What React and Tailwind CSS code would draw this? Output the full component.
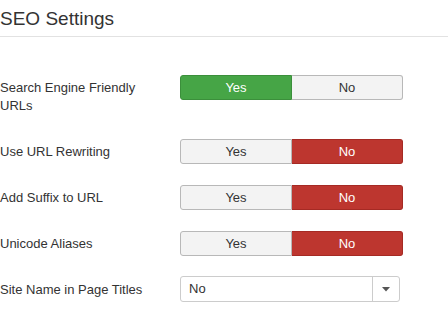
import React from "react";

const rows = [
  { label: "Search Engine Friendly URLs", value: "yes" },
  { label: "Use URL Rewriting", value: "no" },
  { label: "Add Suffix to URL", value: "no" },
  { label: "Unicode Aliases", value: "no" },
];

const Toggle = ({ value }) => {
  const yes = value === "yes";
  return (
    <div className="flex h-[25px] w-[223px] text-[13px]">
      <div
        className={
          yes
            ? "flex flex-1 items-center justify-center rounded-l-[3px] border border-[#3b8f3b] bg-[#46a546] text-white"
            : "flex flex-1 items-center justify-center rounded-l-[3px] border border-[#b8b8b8] bg-[#f3f3f3] text-[#333]"
        }
      >
        Yes
      </div>
      <div
        className={
          yes
            ? "flex flex-1 items-center justify-center rounded-r-[3px] border border-l-0 border-[#b8b8b8] bg-[#f3f3f3] text-[#333]"
            : "flex flex-1 items-center justify-center rounded-r-[3px] border border-l-0 border-[#a52a24] bg-[#bd362f] text-white"
        }
      >
        No
      </div>
    </div>
  );
};

export default function App() {
  return (
    <div
      className="w-[448px] h-[321px] overflow-hidden bg-white text-[#333]"
      style={{ fontFamily: '"Liberation Sans", Arial, sans-serif' }}
    >
      <div className="border-b border-[#e2e2e2] pt-[7px] pb-[5px] text-[19px] leading-6">
        SEO Settings
      </div>

      <div className="mt-[38px]">
        {rows.map((r) => (
          <div key={r.label} className="mb-[18px] flex">
            <div className="w-[180px] shrink-0 pt-[4px] pb-[6px] pr-[20px] text-[13px] leading-[18px]">
              {r.label}
            </div>
            <Toggle value={r.value} />
          </div>
        ))}

        <div className="flex">
          <div className="w-[180px] shrink-0 pt-[4px] pb-[6px] pr-[20px] text-[13px] leading-[18px]">
            Site Name in Page Titles
          </div>
          <div className="-mt-px flex h-[26px] w-[220px] rounded-[3px] border border-[#ccc] text-[13px]">
            <div className="flex flex-1 items-center pl-2">No</div>
            <div className="flex w-[27px] items-center justify-center border-l border-[#ccc]">
              <svg width="8" height="5" viewBox="0 0 8 5">
                <path d="M0 0h8L4 4.5z" fill="#555" />
              </svg>
            </div>
          </div>
        </div>
      </div>
    </div>
  );
}
